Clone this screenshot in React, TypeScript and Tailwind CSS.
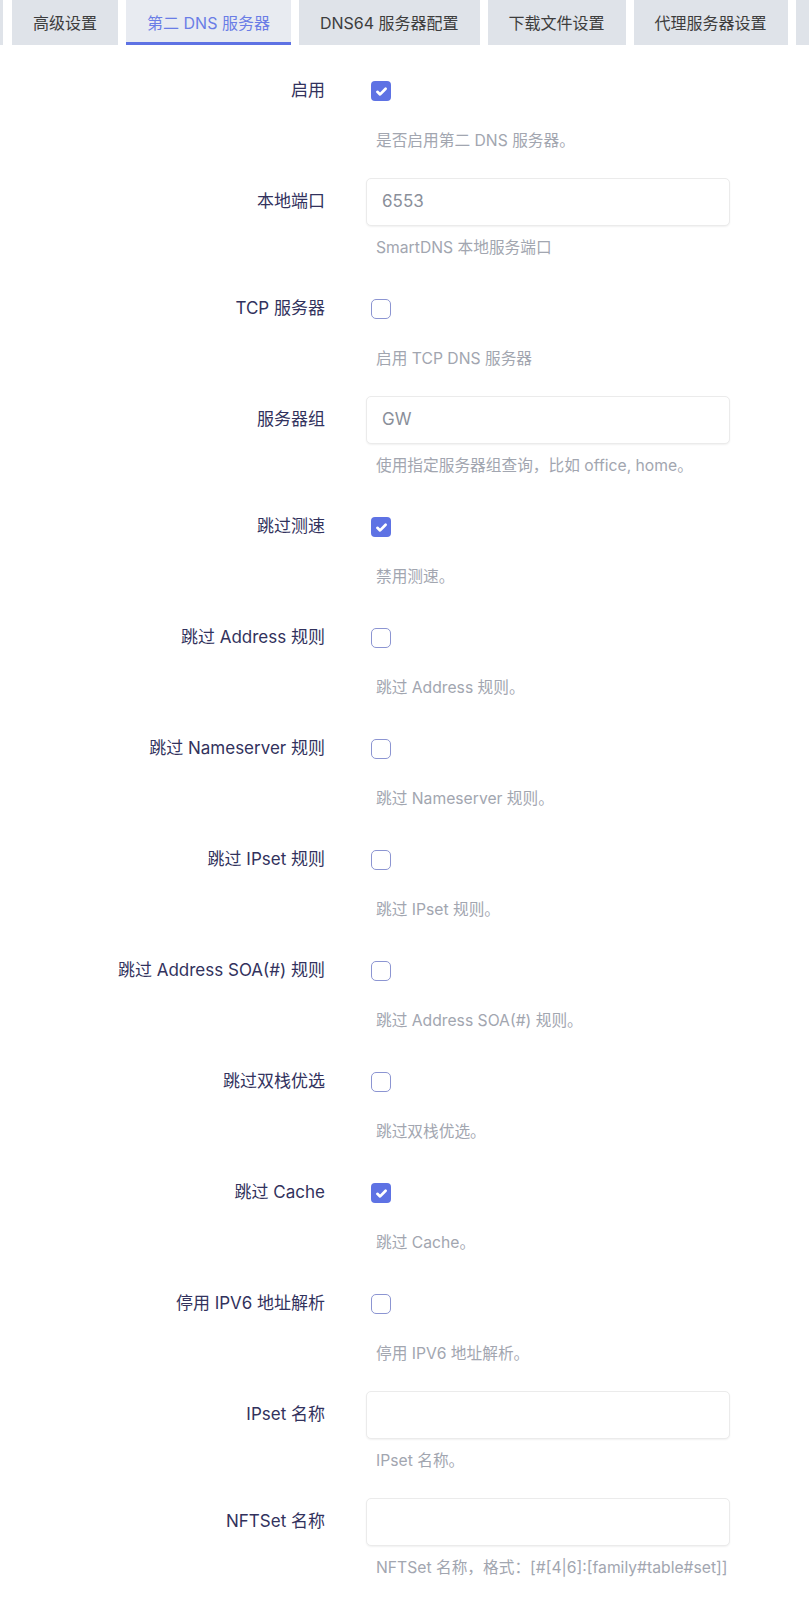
import React from "react";

type Row =
  | { kind: "check"; label: string; help: string; checked: boolean }
  | { kind: "input"; label: string; help: string; value: string };

const tabs = ["基本设置", "高级设置", "第二 DNS 服务器", "DNS64 服务器配置", "下载文件设置", "代理服务器设置", "自定义设置"];

const rows: Row[] = [
  { kind: "check", label: "启用", help: "是否启用第二 DNS 服务器。", checked: true },
  { kind: "input", label: "本地端口", help: "SmartDNS 本地服务端口", value: "6553" },
  { kind: "check", label: "TCP 服务器", help: "启用 TCP DNS 服务器", checked: false },
  { kind: "input", label: "服务器组", help: "使用指定服务器组查询，比如 office, home。", value: "GW" },
  { kind: "check", label: "跳过测速", help: "禁用测速。", checked: true },
  { kind: "check", label: "跳过 Address 规则", help: "跳过 Address 规则。", checked: false },
  { kind: "check", label: "跳过 Nameserver 规则", help: "跳过 Nameserver 规则。", checked: false },
  { kind: "check", label: "跳过 IPset 规则", help: "跳过 IPset 规则。", checked: false },
  { kind: "check", label: "跳过 Address SOA(#) 规则", help: "跳过 Address SOA(#) 规则。", checked: false },
  { kind: "check", label: "跳过双栈优选", help: "跳过双栈优选。", checked: false },
  { kind: "check", label: "跳过 Cache", help: "跳过 Cache。", checked: true },
  { kind: "check", label: "停用 IPV6 地址解析", help: "停用 IPV6 地址解析。", checked: false },
  { kind: "input", label: "IPset 名称", help: "IPset 名称。", value: "" },
  { kind: "input", label: "NFTSet 名称", help: "NFTSet 名称，格式：[#[4|6]:[family#table#set]]", value: "" },
];

function Checkbox({ checked }: { checked: boolean }) {
  if (checked) {
    return (
      <span className="ml-[5px] flex size-5 items-center justify-center rounded-[4px] bg-[#5e72e4]">
        <svg width="13" height="13" viewBox="0 0 12 12" fill="none">
          <path d="M2.2 6.3l2.5 2.4 5.1-5.2" stroke="#fff" strokeWidth="2.5" strokeLinecap="round" strokeLinejoin="round" />
        </svg>
      </span>
    );
  }
  return <span className="ml-[5px] block size-5 rounded-[5px] border-[1.5px] border-[#8c95d2] bg-white" />;
}

export default function App() {
  return (
    <div className="min-h-[1600px] w-[809px] overflow-hidden bg-white font-['Inter','Noto_Sans_CJK_SC',sans-serif]">
      {/* tab bar, scrolled so the first tab is cut off */}
      <div className="flex h-[45px] gap-2 overflow-hidden whitespace-nowrap">
        {tabs.map((t, i) => {
          const active = i === 2;
          return (
            <div
              key={t}
              className={
                "relative flex h-full shrink-0 items-center px-[21px] text-[16px] " +
                (i === 0 ? "ml-[-103px] mr-[1px] " : "") +
                (active
                  ? "bg-[#e8ebf1] text-[#6a7de6] shadow-[inset_0_-3px_0_#5e72e4]"
                  : "bg-[#dfe3e9] text-[#3d3d3d]")
              }
            >
              {t}
            </div>
          );
        })}
      </div>

      <div className="mt-[8px] flex flex-col">
        {rows.map((r) => (
          <div key={r.label} className="flex pt-[14px] pb-[13px]">
            <div className="flex h-12 w-[325px] shrink-0 items-center justify-end text-[17px] text-[#32325d]">
              {r.label}
            </div>
            <div className="ml-[41px] flex w-[364px] flex-col">
              {r.kind === "check" ? (
                <div className="flex h-12 items-center">
                  <Checkbox checked={r.checked} />
                </div>
              ) : (
                <div className="flex h-12 items-center rounded-[5px] border border-[#ebebeb] bg-white px-[15px] text-[17px] text-[#8a8f9a] shadow-[0_1px_2px_rgba(0,0,0,0.06)]">
                  {r.value}
                </div>
              )}
              <div
                className={
                  "ml-[10px] whitespace-nowrap text-[15.7px] leading-5 text-[#a2a6b0] " +
                  (r.kind === "check" ? "mt-4" : "mt-3")
                }
              >
                {r.help}
              </div>
            </div>
          </div>
        ))}
      </div>
    </div>
  );
}
